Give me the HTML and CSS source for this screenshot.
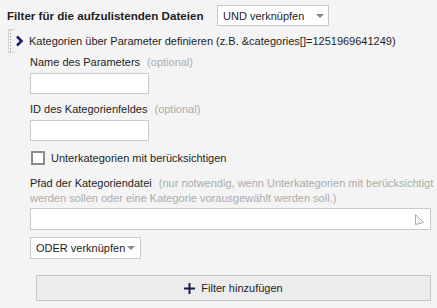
FILE: index.html
```html
<!DOCTYPE html>
<html lang="de">
<head>
  <meta charset="UTF-8" />
  <title>Filter</title>
  <link rel="stylesheet" href="styles.css">
</head>
<body>

  <div class="kopf">
    <span class="titel">Filter für die aufzulistenden Dateien</span>
    <div class="auswahl auswahl-oben">
      <span>UND verknüpfen</span>
      <span class="pfeil"></span>
    </div>
  </div>

  <div class="filter">
    <div class="filter-zeile">
      <div class="griff"></div>
      <svg class="chevron" width="9" height="12" viewBox="0 0 9 12">
        <polyline points="2,1.5 6.5,6 2,10.5" fill="none" stroke="#1c1f6e" stroke-width="2.6" />
      </svg>
      <span>Kategorien über Parameter definieren (z.B. &amp;categories[]=1251969641249)</span>
    </div>

    <div class="felder">
      <div class="feld feld-erstes">
        <label>Name des Parameters <span class="hinweis">(optional)</span></label>
        <input type="text" class="eingabe" />
      </div>

      <div class="feld">
        <label>ID des Kategorienfeldes <span class="hinweis">(optional)</span></label>
        <input type="text" class="eingabe" />
      </div>

      <div class="checkbox-zeile">
        <span class="kasten"></span>
        <span>Unterkategorien mit berücksichtigen</span>
      </div>

      <div class="feld feld-pfad">
        <label>Pfad der Kategoriendatei <span class="hinweis">(nur notwendig, wenn Unterkategorien mit berücksichtigt werden sollen oder eine Kategorie vorausgewählt werden soll.)</span></label>
        <div class="eingabe eingabe-breit">
          <svg width="11" height="13" viewBox="0 0 11 13">
            <polygon points="1.5,1.5 9.5,9.5 1.5,11.5" fill="#fbfbfb" stroke="#a8a8a8" stroke-width="1" />
          </svg>
        </div>
      </div>

      <div class="auswahl auswahl-unten">
        <span>ODER verknüpfen</span>
        <span class="pfeil"></span>
      </div>
    </div>
  </div>

  <button class="knopf">
    <svg width="11" height="11" viewBox="0 0 11 11">
      <path d="M5.5 0V11M0 5.5H11" stroke="#141a4a" stroke-width="2" />
    </svg>
    Filter hinzufügen
  </button>

</body>
</html>
```

FILE: styles.css
```css
* {
  box-sizing: border-box;
  margin: 0;
  padding: 0;
}

body {
  font-family: 'Liberation Sans', Arial, sans-serif;
  font-size: 11px;
  color: #1e1e1e;
  background-color: #f4f4f4;
  width: 437px;
  height: 308px;
  padding: 5px 7px 0 7px;
}

.kopf {
  display: flex;
  align-items: center;
  height: 21px;
}

.titel {
  font-weight: bold;
  font-size: 11.6px;
  width: 210px;
}

.auswahl {
  display: flex;
  align-items: center;
  justify-content: space-between;
  height: 21px;
  white-space: nowrap;
  background-color: #ffffff;
  border: 1px solid #c9c9c9;
  padding: 0 5px 0 5px;
}

.auswahl-oben {
  width: 112px;
  padding-right: 4px;
}

.auswahl-unten {
  width: 111px;
  height: 22px;
  margin-top: 7px;
}

.pfeil {
  width: 0;
  height: 0;
  border-left: 4px solid transparent;
  border-right: 4px solid transparent;
  border-top: 4px solid #8a8a8a;
}

.filter {
  margin-top: 3px;
}

.filter-zeile {
  display: flex;
  align-items: center;
  height: 24px;
}

.griff {
  width: 7px;
  height: 24px;
  border: 1px solid #d6d6d6;
  border-right: none;
  background: linear-gradient(#8c8c8c 50%, transparent 50%) 1px 0 / 1px 3px repeat-y;
  margin-left: 1px;
}

.chevron {
  margin: 0 5px 0 0;
}

.felder {
  display: flex;
  flex-direction: column;
  align-items: flex-start;
  padding-left: 23px;
}

.feld {
  display: flex;
  flex-direction: column;
  align-items: flex-start;
  margin-top: 8px;
}

.feld-erstes {
  margin-top: 2px;
}

.feld-pfad {
  margin-top: 11px;
}

.feld label {
  line-height: 15px;
  margin-bottom: 3px;
}

.feld-pfad label {
  margin-bottom: 2px;
  width: 408px;
}

.hinweis {
  color: #ababab;
  margin-left: 4px;
}

.eingabe {
  display: block;
  width: 119px;
  height: 21px;
  background-color: #ffffff;
  border: 1px solid #c9c9c9;
}

.eingabe-breit {
  width: 401px;
  height: 22px;
  display: flex;
  align-items: center;
  justify-content: flex-end;
  padding-right: 5px;
}

.checkbox-zeile {
  display: flex;
  align-items: center;
  gap: 6px;
  margin-top: 10px;
  height: 14px;
}

.kasten {
  width: 14px;
  height: 14px;
  border: 2px solid #8c8c8c;
  background-color: #ffffff;
  margin-left: 1px;
}

.knopf {
  display: flex;
  align-items: center;
  justify-content: center;
  gap: 6px;
  width: 395px;
  height: 26px;
  margin: 16px 0 0 29px;
  font-family: 'Liberation Sans', Arial, sans-serif;
  font-size: 11px;
  color: #1e1e1e;
  background-color: #ececec;
  border: 1px solid #c5c5c5;
}
```
